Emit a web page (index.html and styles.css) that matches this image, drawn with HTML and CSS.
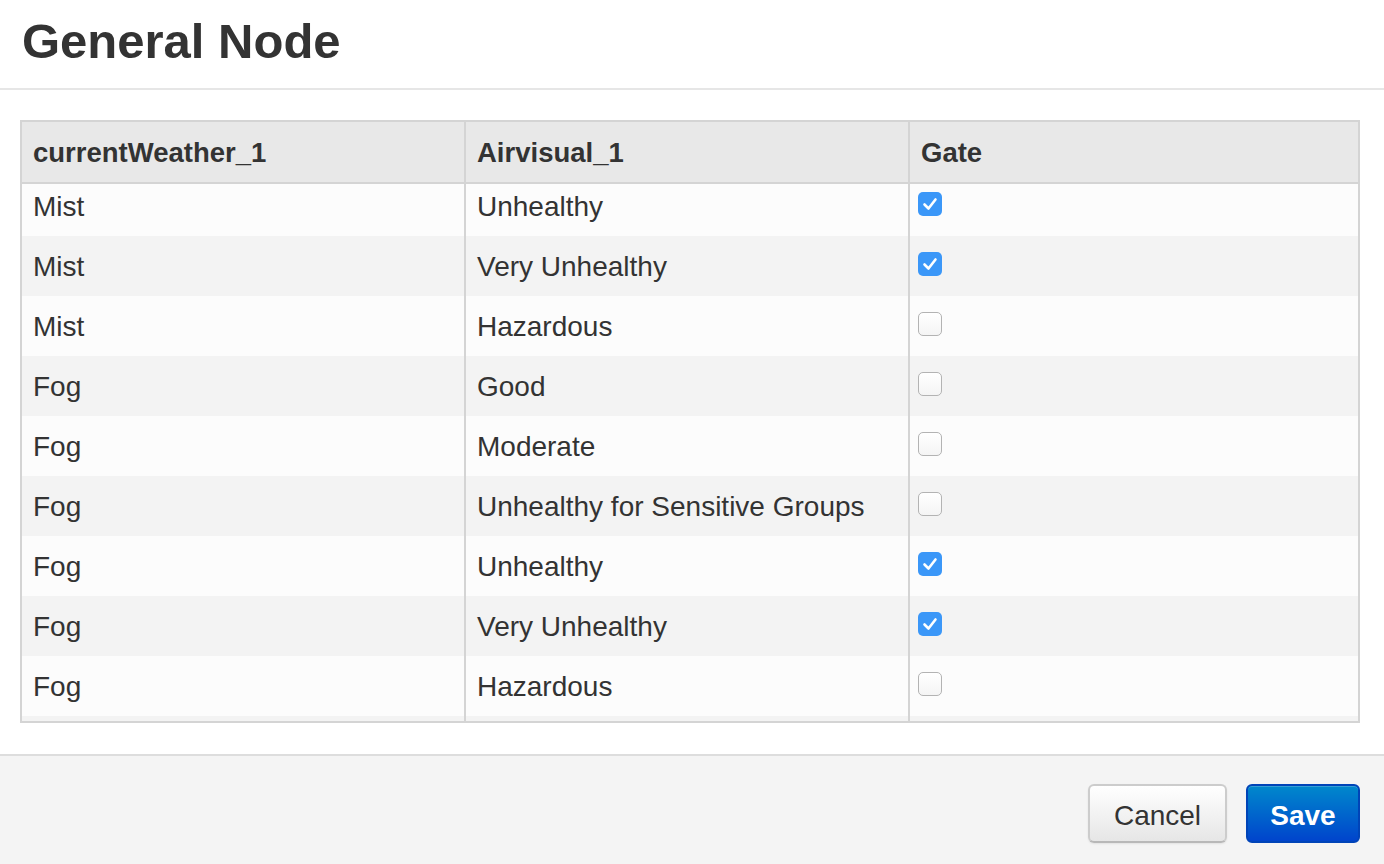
FILE: index.html
```html
<!DOCTYPE html>
<html>
<head>
<meta charset="utf-8">
<link rel="stylesheet" href="styles.css">
</head>
<body>
<div class="modal">
  <div class="modal-header">
    <h3 class="title">General Node</h3>
  </div>
  <div class="modal-body">
    <div class="grid-box">
      <div class="grid-head">
        <div class="cell hcell">currentWeather_1</div>
        <div class="cell hcell">Airvisual_1</div>
        <div class="cell hcell last">Gate</div>
      </div>
      <div class="grid-viewport">
        <div class="grid-rows">
          <div class="row odd"><div class="cell">Mist</div><div class="cell">Unhealthy</div><div class="cell last chk-cell"><span class="chk on"><svg viewBox="0 0 24 24"><path d="M6.5 12.5 L10.5 16.5 L17.5 7.5"/></svg></span></div></div>
          <div class="row even"><div class="cell">Mist</div><div class="cell">Very Unhealthy</div><div class="cell last chk-cell"><span class="chk on"><svg viewBox="0 0 24 24"><path d="M6.5 12.5 L10.5 16.5 L17.5 7.5"/></svg></span></div></div>
          <div class="row odd"><div class="cell">Mist</div><div class="cell">Hazardous</div><div class="cell last chk-cell"><span class="chk"></span></div></div>
          <div class="row even"><div class="cell">Fog</div><div class="cell">Good</div><div class="cell last chk-cell"><span class="chk"></span></div></div>
          <div class="row odd"><div class="cell">Fog</div><div class="cell">Moderate</div><div class="cell last chk-cell"><span class="chk"></span></div></div>
          <div class="row even"><div class="cell">Fog</div><div class="cell">Unhealthy for Sensitive Groups</div><div class="cell last chk-cell"><span class="chk"></span></div></div>
          <div class="row odd"><div class="cell">Fog</div><div class="cell">Unhealthy</div><div class="cell last chk-cell"><span class="chk on"><svg viewBox="0 0 24 24"><path d="M6.5 12.5 L10.5 16.5 L17.5 7.5"/></svg></span></div></div>
          <div class="row even"><div class="cell">Fog</div><div class="cell">Very Unhealthy</div><div class="cell last chk-cell"><span class="chk on"><svg viewBox="0 0 24 24"><path d="M6.5 12.5 L10.5 16.5 L17.5 7.5"/></svg></span></div></div>
          <div class="row odd"><div class="cell">Fog</div><div class="cell">Hazardous</div><div class="cell last chk-cell"><span class="chk"></span></div></div>
          <div class="row even"><div class="cell"></div><div class="cell"></div><div class="cell last"></div></div>
        </div>
      </div>
    </div>
  </div>
  <div class="modal-footer">
    <button class="btn btn-cancel">Cancel</button>
    <button class="btn btn-save">Save</button>
  </div>
</div>
</body>
</html>
```
FILE: styles.css
```css
* { box-sizing: border-box; }
html, body {
  margin: 0;
  padding: 0;
  background: #ffffff;
}
body {
  font-family: "Liberation Sans", Arial, Helvetica, sans-serif;
  color: #333333;
  width: 1384px;
  height: 864px;
  overflow: hidden;
}
.modal {
  display: flex;
  flex-direction: column;
  height: 864px;
}
.modal-header {
  height: 90px;
  padding: 13px 22px 0 22px;
  border-bottom: 2px solid #e6e6e6;
}
.title {
  margin: 0;
  font-size: 49px;
  line-height: 56px;
  font-weight: bold;
  color: #333333;
}
.modal-body {
  padding: 30px 24px 0 20px;
  height: 666px;
  border-bottom: 2px solid #dddddd;
}
.grid-box {
  border: 2px solid #d4d4d4;
  height: 603px;
  display: flex;
  flex-direction: column;
}
.grid-head {
  display: grid;
  grid-template-columns: 444px 444px 1fr;
  height: 62px;
  background: #e8e8e8;
  border-bottom: 2px solid #d4d4d4;
}
.cell {
  padding-left: 11px;
  font-size: 28px;
  line-height: 62px;
  height: 60px;
  border-right: 2px solid #d4d4d4;
  white-space: nowrap;
  overflow: hidden;
}
.cell.last { border-right: none; }
.hcell {
  font-weight: bold;
  font-size: 27.5px;
  line-height: 61px;
}
.grid-viewport {
  flex: 1;
  overflow: hidden;
}
.grid-rows {
  margin-top: -8px;
}
.row {
  display: grid;
  grid-template-columns: 444px 444px 1fr;
  height: 60px;
}
.row.odd { background: #fcfcfc; }
.row.even { background: #f3f3f3; }
.chk-cell {
  padding-left: 8px;
  padding-top: 16px;
}
.chk {
  display: block;
  width: 24px;
  height: 24px;
  border-radius: 5px;
  border: 1.5px solid #b3b3b3;
  background: linear-gradient(#ffffff, #f4f4f4);
}
.chk.on {
  border: none;
  background: #3b97f8;
}
.chk svg {
  display: block;
  width: 24px;
  height: 24px;
}
.chk svg path {
  fill: none;
  stroke: #ffffff;
  stroke-width: 2.6;
  stroke-linecap: round;
  stroke-linejoin: round;
}
.modal-footer {
  flex: 1;
  background: #f4f4f4;
  display: flex;
  justify-content: flex-end;
  align-items: flex-start;
  gap: 19px;
  padding: 28px 24px 0 0;
}
.btn {
  height: 59px;
  border-radius: 6px;
  font-family: "Liberation Sans", Arial, Helvetica, sans-serif;
  font-size: 28px;
  line-height: 1;
  padding: 4px 0 0 0;
  cursor: pointer;
}
.btn-cancel {
  width: 139px;
  color: #333333;
  background: linear-gradient(#ffffff, #e6e6e6);
  border: 2px solid #cccccc;
  border-bottom-color: #b8b8b8;
  box-shadow: 0 1px 2px rgba(0,0,0,0.08);
}
.btn-save {
  width: 114px;
  color: #ffffff;
  font-weight: bold;
  background: linear-gradient(#0088cc, #0044cc);
  border: 2px solid #0044b8;
  box-shadow: inset 0 1px 0 rgba(255,255,255,0.2);
}
```
